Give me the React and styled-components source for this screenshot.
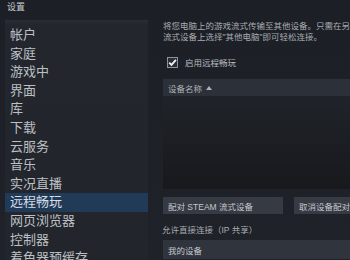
import React from "react";
import styled, { createGlobalStyle } from "styled-components";

const Global = createGlobalStyle`
  html, body { margin: 0; padding: 0; background: #1e2127; overflow: hidden; }
  body { font-family: "Liberation Sans", "Noto Sans CJK SC", sans-serif; }
`;

const Window = styled.div`
  width: 350px;
  height: 260px;
  overflow: hidden;
  background: linear-gradient(180deg, #1c1f25 0%, #1f2228 100%);
  display: flex;
  flex-direction: column;
`;

const TitleBar = styled.div`
  height: 20px;
  flex: none;
  padding-left: 7px;
  font-size: 9px;
  line-height: 15px;
  color: #c9ccd0;
`;

const Body = styled.div`
  flex: 1;
  display: flex;
  min-height: 0;
`;

const Sidebar = styled.nav`
  flex: none;
  width: 143px;
  margin-left: 5px;
  padding-top: 6px;
  background: linear-gradient(180deg, #2a2d35 0px, #23262d 5px, #22252b 100%);
  box-sizing: border-box;
`;

const NavItem = styled.div`
  height: 18.6px;
  line-height: 18.6px;
  padding-left: 5px;
  font-size: 13px;
  color: ${(p) => (p.$active ? "#d6dde6" : "#bcc0c5")};
  background: ${(p) => (p.$active ? "#213a58" : "transparent")};
  white-space: nowrap;
`;

const Main = styled.main`
  flex: none;
  width: 240px;
  margin-left: 15px;
  padding-top: 1px;
  display: flex;
  flex-direction: column;
`;

const Desc = styled.p`
  margin: 0;
  font-size: 8.5px;
  line-height: 10.5px;
  color: #a9adb2;
  white-space: nowrap;
`;

const CheckRow = styled.label`
  display: flex;
  align-items: center;
  gap: 7px;
  margin-top: 14px;
  margin-left: 4px;
  font-size: 8.5px;
  color: #b9bdc2;
  height: 12px;
`;

const Box = styled.span`
  width: 11px;
  height: 11px;
  box-sizing: border-box;
  border: 1px solid #8e939a;
  background: #2a2d33;
  display: flex;
  align-items: center;
  justify-content: center;
`;

const TableHead = styled.div`
  margin-top: 11px;
  height: 17px;
  background: #2c3038;
  display: flex;
  align-items: center;
  padding-left: 5px;
  font-size: 8.5px;
  color: #aeb2b7;
  gap: 4px;
`;

const TableBody = styled.div`
  height: 93px;
  background: linear-gradient(180deg, #202329 0%, #17191d 100%);
`;

const Buttons = styled.div`
  display: flex;
  gap: 11px;
  margin-top: 8px;
`;

const Button = styled.button`
  all: unset;
  box-sizing: border-box;
  height: 17px;
  width: ${(p) => p.$w}px;
  flex: none;
  background: #363a43;
  color: #c4c8cd;
  font-size: 8.5px;
  padding-left: 5px;
  display: flex;
  align-items: center;
  font-family: "Liberation Sans", "Noto Sans CJK SC", sans-serif;
`;

const FieldLabel = styled.div`
  margin-top: 11px;
  font-size: 8.5px;
  line-height: 10px;
  color: #a9adb2;
  margin-left: -1px;
`;

const Select = styled.div`
  margin-top: 5px;
  height: 19px;
  background: #30343c;
  display: flex;
  align-items: center;
  padding-left: 5px;
  font-size: 8.5px;
  color: #c4c8cd;
`;

const items = [
  "帐户", "家庭", "游戏中", "界面", "库", "下载", "云服务", "音乐",
  "实况直播", "远程畅玩", "网页浏览器", "控制器", "着色器预缓存",
];

export default function App() {
  return (
    <Window>
      <Global />
      <TitleBar>设置</TitleBar>
      <Body>
        <Sidebar>
          {items.map((t) => (
            <NavItem key={t} $active={t === "远程畅玩"}>{t}</NavItem>
          ))}
        </Sidebar>
        <Main>
          <Desc>
            将您电脑上的游戏流式传输至其他设备。只需在另一台
            <br />
            流式设备上选择"其他电脑"即可轻松连接。
          </Desc>
          <CheckRow>
            <Box>
              <svg width="9" height="9" viewBox="0 0 9 9">
                <path d="M1.2 4.6 L3.5 6.9 L7.9 1.8" fill="none" stroke="#f2f3f4" strokeWidth="1.8" />
              </svg>
            </Box>
            启用远程畅玩
          </CheckRow>
          <TableHead>
            设备名称
            <svg width="6" height="4" viewBox="0 0 6 4">
              <path d="M0 4 L3 0 L6 4 Z" fill="#aeb2b7" />
            </svg>
          </TableHead>
          <TableBody />
          <Buttons>
            <Button $w={120}>配对 STEAM 流式设备</Button>
            <Button $w={120}>取消设备配对</Button>
          </Buttons>
          <FieldLabel>允许直接连接（IP 共享）</FieldLabel>
          <Select>我的设备</Select>
        </Main>
      </Body>
    </Window>
  );
}
